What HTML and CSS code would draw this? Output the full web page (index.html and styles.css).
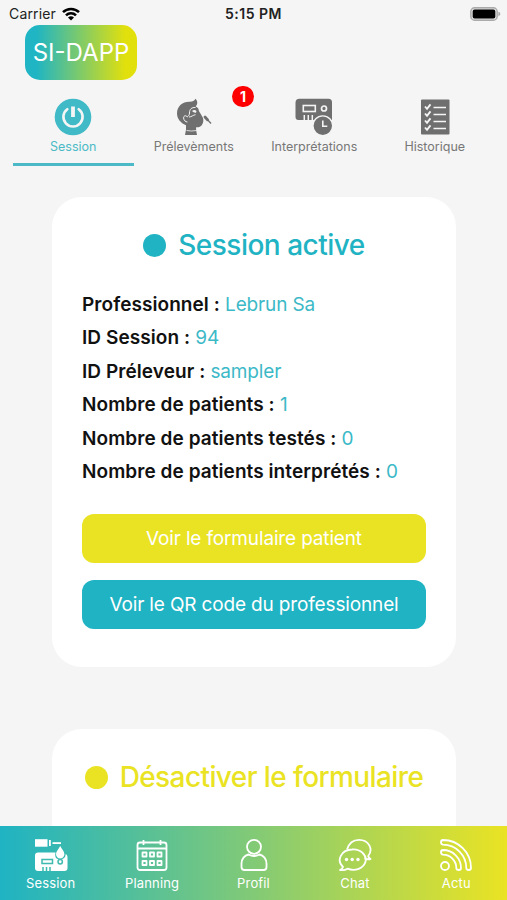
FILE: index.html
```html
<!DOCTYPE html>
<html lang="fr">
<head>
  <meta charset="UTF-8" />
  <meta name="viewport" content="width=device-width, initial-scale=1.0"/>
  <title>SI-DAPP</title>
  <link rel="stylesheet" href="styles.css">
</head>
<body>

<div class="app">
  <div class="status-bar">
    <div class="carrier">
      <span>Carrier</span>
      <svg width="18" height="14" viewBox="0 0 18 14">
        <g fill="none" stroke="#000" stroke-width="2.5">
          <path d="M1 5.2a11.3 11.3 0 0 1 16 0"/>
          <path d="M4 8.3a7 7 0 0 1 10 0"/>
        </g>
        <path d="M9 13.6l-3-3a4.3 4.3 0 0 1 6 0z"/>
      </svg>
    </div>
    <div class="time">5:15 PM</div>
    <div class="battery">
      <svg width="31" height="14" viewBox="0 0 31 14">
        <rect x="0.8" y="0.8" width="26.4" height="12.4" rx="3.8" fill="#ddd" stroke="#aaa" stroke-width="1.4"/>
        <rect x="2.7" y="2.5" width="22.6" height="9" rx="2"/>
        <path d="M28.4 4.8q2 .6 2 2.2t-2 2.2z" fill="#aaa"/>
      </svg>
    </div>
  </div>

  <div class="logo">SI-DAPP</div>

  <nav class="tabs">
    <a class="tab active">
      <svg width="38" height="38" viewBox="0 0 38 38">
        <circle cx="19" cy="19" r="18.3" fill="#3fbac6"/>
        <path d="M13.3 11.2a9.6 9.6 0 1 0 11.4 0" fill="none" stroke="#f5f5f5" stroke-width="2.6" stroke-linecap="round"/>
        <path d="M19 8.500v10.500" stroke="#f5f5f5" stroke-width="3.8"/>
      </svg>
      <span>Session</span>
    </a>
    <a class="tab">
      <svg width="40" height="38" viewBox="0 0 40 38">
        <g fill="#6f6f6f">
          <path d="M21.500.8c2.500 2.500 2.200 5.500.2 7.700 2 .8 3.200 2.500 3.200 4.500l2 3.200 2 3.500c.8 2.500.5 5-1 7.200-1.200 1.800-3.300 2.600-5.800 2.300v3H12v-5C6.500 25 3 20.500 3 15.500 3 8 9 3.600 15.500 3.800c3 .1 5-.8 6-3z"/>
          <path d="M12 31.500h10l1 5.500H11z"/>
        </g>
        <g fill="none" stroke="#f5f5f5" stroke-width="1">
          <path d="M21.500 9.500c-4-.3-6 1.800-6 5.500 0 2-1 3-2.300 4-.8-2-3.800-1.500-3.600 1 .2 2.400 2 4 3.800 4"/>
          <path d="M15 19c2.500 0 4-2 6.500-2.300"/>
          <path d="M12.500 32.500q5 1 10 0" stroke-width=".8"/>
        </g>
        <path d="M18 13q2.500-2 4.500.2l-.5 1.500q-2 .5-4-1.700z" fill="#f5f5f5"/>
        <path d="M30.500 18.500l6.500 7" stroke="#6f6f6f" stroke-width="1.300"/>
        <path d="M31 19l2.500 2.700" stroke="#6f6f6f" stroke-width="2.800" stroke-linecap="round"/>
      </svg>
      <span>Prélevèments</span>
      <b class="badge">1</b>
    </a>
    <a class="tab">
      <svg width="38" height="38" viewBox="0 0 38 38">
        <path d="M4.500.8h29a3.500 3.500 0 0 1 3.500 3.500V22H3.500a3 3 0 0 1-3-3V4.800a4 4 0 0 1 4-4z" fill="#6f6f6f"/>
        <rect x="8.300" y="7.500" width="12" height="6" fill="none" stroke="#f5f5f5" stroke-width="1.600"/>
        <circle cx="29" cy="10.500" r="2.500" fill="none" stroke="#f5f5f5" stroke-width="1.700"/>
        <path d="M9.300 17v5M13.300 17v5M17.300 17v5" stroke="#f5f5f5" stroke-width="1.500"/>
        <circle cx="27.800" cy="27.800" r="9.900" fill="#6f6f6f" stroke="#f5f5f5" stroke-width="1.400"/>
        <path d="M27.800 22.500v5.800h4.500" fill="none" stroke="#f5f5f5" stroke-width="1.600"/>
      </svg>
      <span>Interprétations</span>
    </a>
    <a class="tab">
      <svg width="38" height="38" viewBox="0 0 38 38">
        <rect x="5" y="1.500" width="28.500" height="35" rx="1" fill="#6f6f6f"/>
        <g fill="none" stroke="#f5f5f5" stroke-width="1.900">
          <path d="M9 8.500l2 2.300 3.500-4.500M9 15.500l2 2.300 3.500-4.500M9 22.500l2 2.300 3.500-4.500M9 29.500l2 2.300 3.500-4.500"/>
          <path d="M17.500 9.500h12.500M17.500 16.500h12.500M17.500 23.500h12.500M17.500 30.500h12.500" stroke-width="1.500"/>
        </g>
      </svg>
      <span>Historique</span>
    </a>
  </nav>

  <main class="content">
    <section class="card">
      <h2 class="card-title"><i class="dot"></i>Session active</h2>
      <ul class="infos">
        <li><b>Professionnel :</b> Lebrun Sa</li>
        <li><b>ID Session :</b> 94</li>
        <li><b>ID Préleveur :</b> sampler</li>
        <li><b>Nombre de patients :</b> 1</li>
        <li><b>Nombre de patients testés :</b> 0</li>
        <li><b>Nombre de patients interprétés :</b> 0</li>
      </ul>
      <button class="btn yellow">Voir le formulaire patient</button>
      <button class="btn blue">Voir le QR code du professionnel</button>
    </section>

    <section class="card">
      <h2 class="card-title title-yellow"><i class="dot"></i>Désactiver le formulaire</h2>
    </section>
  </main>

  <footer class="bottom-nav">
    <a>
      <svg width="34" height="34" viewBox="0 0 34 34">
        <g fill="#fff">
          <rect x="1" y="1.200" width="12.500" height="7.500"/>
          <rect x="15" y="2" width="1.800" height="6"/>
          <rect x="18.500" y="4.200" width="8.500" height="1.800"/>
          <path d="M4 14.500h17.500c-1 5 1 7 4.500 7s6-2.500 5.500-5.500q2 .5 2 3V30a3 3 0 0 1-3 3H4a3 3 0 0 1-3-3V17.500a3 3 0 0 1 3-3z"/>
          <path d="M26.200 8c2 3.500 4.200 5.600 4.200 8.200a4.200 4.200 0 0 1-8.400 0c0-2.600 2.200-4.700 4.200-8.200z"/>
        </g>
        <g fill="none" stroke="#3fbaae" stroke-width="1.500">
          <rect x="8" y="21.500" width="10.500" height="4"/>
          <circle cx="26.200" cy="23.800" r="2.200"/>
          <path d="M9 29v4M12.500 29v4M16 29v4"/>
        </g>
      </svg>
      <span>Session</span>
    </a>
    <a>
      <svg class="line" width="34" height="34" viewBox="0 0 34 34">
        <rect x="2.500" y="4.500" width="29" height="27.500" rx="2.500"/>
        <path d="M2.500 10.500h29M8.500 2v5M25.500 2v5"/>
        <path d="M7.500 14.500h4v4h-4zM15 14.500h4v4h-4zM22.500 14.500h4v4h-4zM7.500 23h4v4h-4zM15 23h4v4h-4zM22.500 23h4v4h-4z"/>
      </svg>
      <span>Planning</span>
    </a>
    <a>
      <svg class="line" width="34" height="34" viewBox="0 0 34 34">
        <circle cx="17" cy="8.800" r="7"/>
        <path d="M11.500 16.500c-4 .8-7 4.500-7 9v3.500q0 3 3 3h19q3 0 3-3v-3.500c0-4.500-3-8.200-7-9q-5.500 3-11 0z"/>
      </svg>
      <span>Profil</span>
    </a>
    <a>
      <svg class="line" width="34" height="34" viewBox="0 0 34 34">
        <path d="M14 11.500a12.500 10.500 0 0 0-9 17.500q-.5 2-3 3 4.500.8 7.500-1.300A12.500 10.200 0 1 0 14 11.500z"/>
        <path d="M9 11.500C11 5 15.500 1.800 21 1.800c10 0 14.500 9.500 9.200 16.200q.3 2 2.300 3-3.500.7-6-.5"/>
        <g class="dots"><circle cx="8.500" cy="21.500" r="1.700"/><circle cx="14.200" cy="21.500" r="1.700"/><circle cx="20" cy="21.500" r="1.700"/></g>
      </svg>
      <span>Chat</span>
    </a>
    <a>
      <svg class="line" width="34" height="34" viewBox="0 0 34 34">
        <circle cx="6" cy="28" r="4"/>
        <path d="M4 2a28 28 0 0 1 28 28q0 2-2.300 2T27.300 30A23.300 23.300 0 0 0 4 6.700Q2 6.500 2 4.300T4 2z"/>
        <path d="M4 12a18 18 0 0 1 18 18q0 2-2.300 2T17.300 30A13.300 13.300 0 0 0 4 16.700Q2 16.500 2 14.300T4 12z"/>
      </svg>
      <span>Actu</span>
    </a>
  </footer>
</div>

</body>
</html>
```

FILE: styles.css
```css
* {
  box-sizing: border-box;
}

body {
  margin: 0;
  background: #f5f5f5;
  font-family: Inter, 'Liberation Sans', sans-serif;
}

.app {
  height: 900px;
  display: flex;
  flex-direction: column;
  overflow: hidden;
}

.status-bar {
  flex: none;
  height: 25px;
  padding: 2px 6px 0 9px;
  display: grid;
  grid-template-columns: 1fr auto 1fr;
  align-items: center;
  font-size: 14px;
  color: #222;
}

.carrier {
  display: flex;
  align-items: center;
  gap: 6px;
  letter-spacing: 0.15px;
}

.time {
  font-weight: 600;
  letter-spacing: 0.5px;
  margin-right: 3px;
}

.battery {
  display: flex;
  justify-content: flex-end;
}

.logo {
  flex: none;
  width: 112px;
  height: 55px;
  margin-left: 25px;
  border-radius: 15px;
  background: linear-gradient(90deg, #1fb5c4 10%, #e2e00c 90%);
  color: #fff;
  font-size: 24px;
  text-align: center;
  line-height: 55px;
}

.tabs {
  flex: none;
  display: flex;
  height: 86px;
  padding: 0 12px 0 13px;
}

.tab {
  position: relative;
  flex: 1;
  display: flex;
  flex-direction: column;
  align-items: center;
  padding-top: 18px;
  font-size: 12.5px;
  line-height: 22px;
  color: #777;
  border-bottom: 3px solid transparent;
}

.tab svg {
  flex: none;
}

.tab.active {
  color: #4bbac6;
  border-color: #4bbac6;
}

.badge {
  position: absolute;
  top: 6px;
  right: 0;
  width: 22px;
  height: 21px;
  border-radius: 11px;
  background: #f00;
  color: #fff;
  font-size: 14px;
  line-height: 21px;
  text-align: center;
}

.content {
  flex: 1;
  min-height: 0;
  overflow: hidden;
  padding: 31px 51px 0 52px;
}

.card {
  height: 470px;
  margin-bottom: 62px;
  padding: 28px 30px;
  background: #fff;
  border-radius: 30px;
}

.card-title {
  margin: 0 -20px;
  display: flex;
  align-items: center;
  justify-content: center;
  gap: 12px;
  height: 40px;
  font-size: 28px;
  font-weight: 450;
  letter-spacing: -0.5px;
  color: #1fb3c3;
  white-space: nowrap;
}

.title-yellow {
  color: #eae323;
  letter-spacing: -0.6px;
}

.dot {
  width: 23px;
  height: 23px;
  border-radius: 50%;
  background: currentColor;
}

.infos {
  list-style: none;
  margin: 23px 0 26px;
  padding: 0;
  font-size: 19px;
  line-height: 33.4px;
  letter-spacing: -0.15px;
  color: #3cb9c7;
  white-space: nowrap;
}

.infos b {
  font-weight: 600;
  letter-spacing: 0.07px;
  color: #111;
}

.btn {
  display: block;
  width: 100%;
  height: 49px;
  margin-bottom: 17px;
  padding: 0;
  border: none;
  border-radius: 12px;
  color: #fff;
  font-family: inherit;
  font-size: 19px;
  letter-spacing: -0.15px;
}

.yellow {
  background: #eae323;
}

.blue {
  background: #1fb3c3;
}

.bottom-nav {
  flex: none;
  height: 74px;
  display: flex;
  padding-top: 12px;
  background: linear-gradient(90deg, #1fb3c3, #82ca76 50%, #eae323);
  color: #fff;
}

.bottom-nav a {
  flex: 1;
  display: flex;
  flex-direction: column;
  align-items: center;
  font-size: 13px;
  line-height: 22px;
  letter-spacing: 0.15px;
}

.line {
  fill: none;
  stroke: #fff;
  stroke-width: 1.8;
  stroke-linejoin: round;
}

.dots {
  fill: #fff;
  stroke: none;
}
```
